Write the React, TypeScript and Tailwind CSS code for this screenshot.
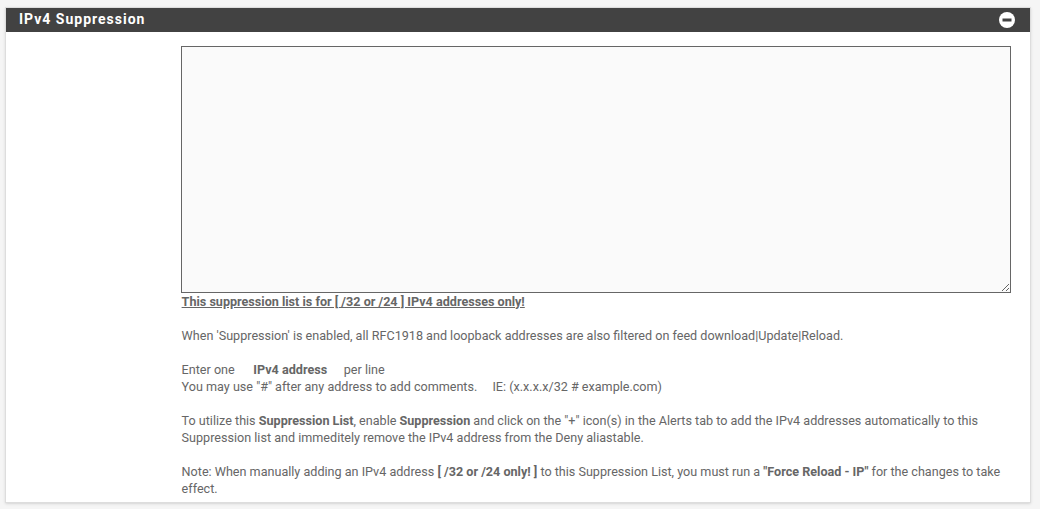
const App = () => {
  return (
    <div className="h-[509px] w-[1040px] overflow-hidden bg-[#f5f5f5] pt-[7px] pl-[5px] pr-[9px] font-['Roboto',sans-serif] text-[12.6px] leading-[17px] text-[#666666]">
      <div className="h-[496px] overflow-hidden border border-[#dddddd] bg-white shadow-sm">
        <div className="flex h-[24px] items-center justify-between bg-[#424242] pl-[13px] pr-[15px]">
          <h2 className="pb-px text-[14px] font-bold tracking-[1px] text-white">IPv4 Suppression</h2>
          <svg className="h-4 w-4" viewBox="0 0 16 16">
            <circle cx="8" cy="8" r="8" fill="#fff" />
            <rect x="3.5" y="6.5" width="9" height="3" fill="#424242" />
          </svg>
        </div>
        <div className="pl-[175px] pr-[19px] pt-[14px]">
          <textarea className="block h-[247px] w-full border border-[#666666] bg-[#fafafa]" />
          <div className="pl-[0.6px]">
            <p className="font-bold underline">This suppression list is for [ /32 or /24 ] IPv4 addresses only!</p>
            <p className="mt-[17px]">When 'Suppression' is enabled, all RFC1918 and loopback addresses are also filtered on feed download|Update|Reload.</p>
            <p className="mt-[17px]">
              Enter one <b className="ml-[15.5px] mr-[13.5px]">IPv4 address</b> per line
            </p>
            <p>You may use "#" after any address to add comments. <span className="ml-[12px]">IE: (x.x.x.x/32 # example.com)</span></p>
            <p className="mt-[17px]">
              To utilize this <b>Suppression List</b>, enable <b>Suppression</b> and click on the "+" icon(s) in the Alerts tab to add the IPv4 addresses automatically to this Suppression list and immeditely remove the IPv4 address from the Deny aliastable.
            </p>
            <p className="mt-[17px]">
              Note: When manually adding an IPv4 address <b>[ /32 or /24 only! ]</b> to this Suppression List, you must run a <b>"Force Reload - IP"</b> for the changes to take effect.
            </p>
          </div>
        </div>
      </div>
    </div>
  );
};

export default App;
